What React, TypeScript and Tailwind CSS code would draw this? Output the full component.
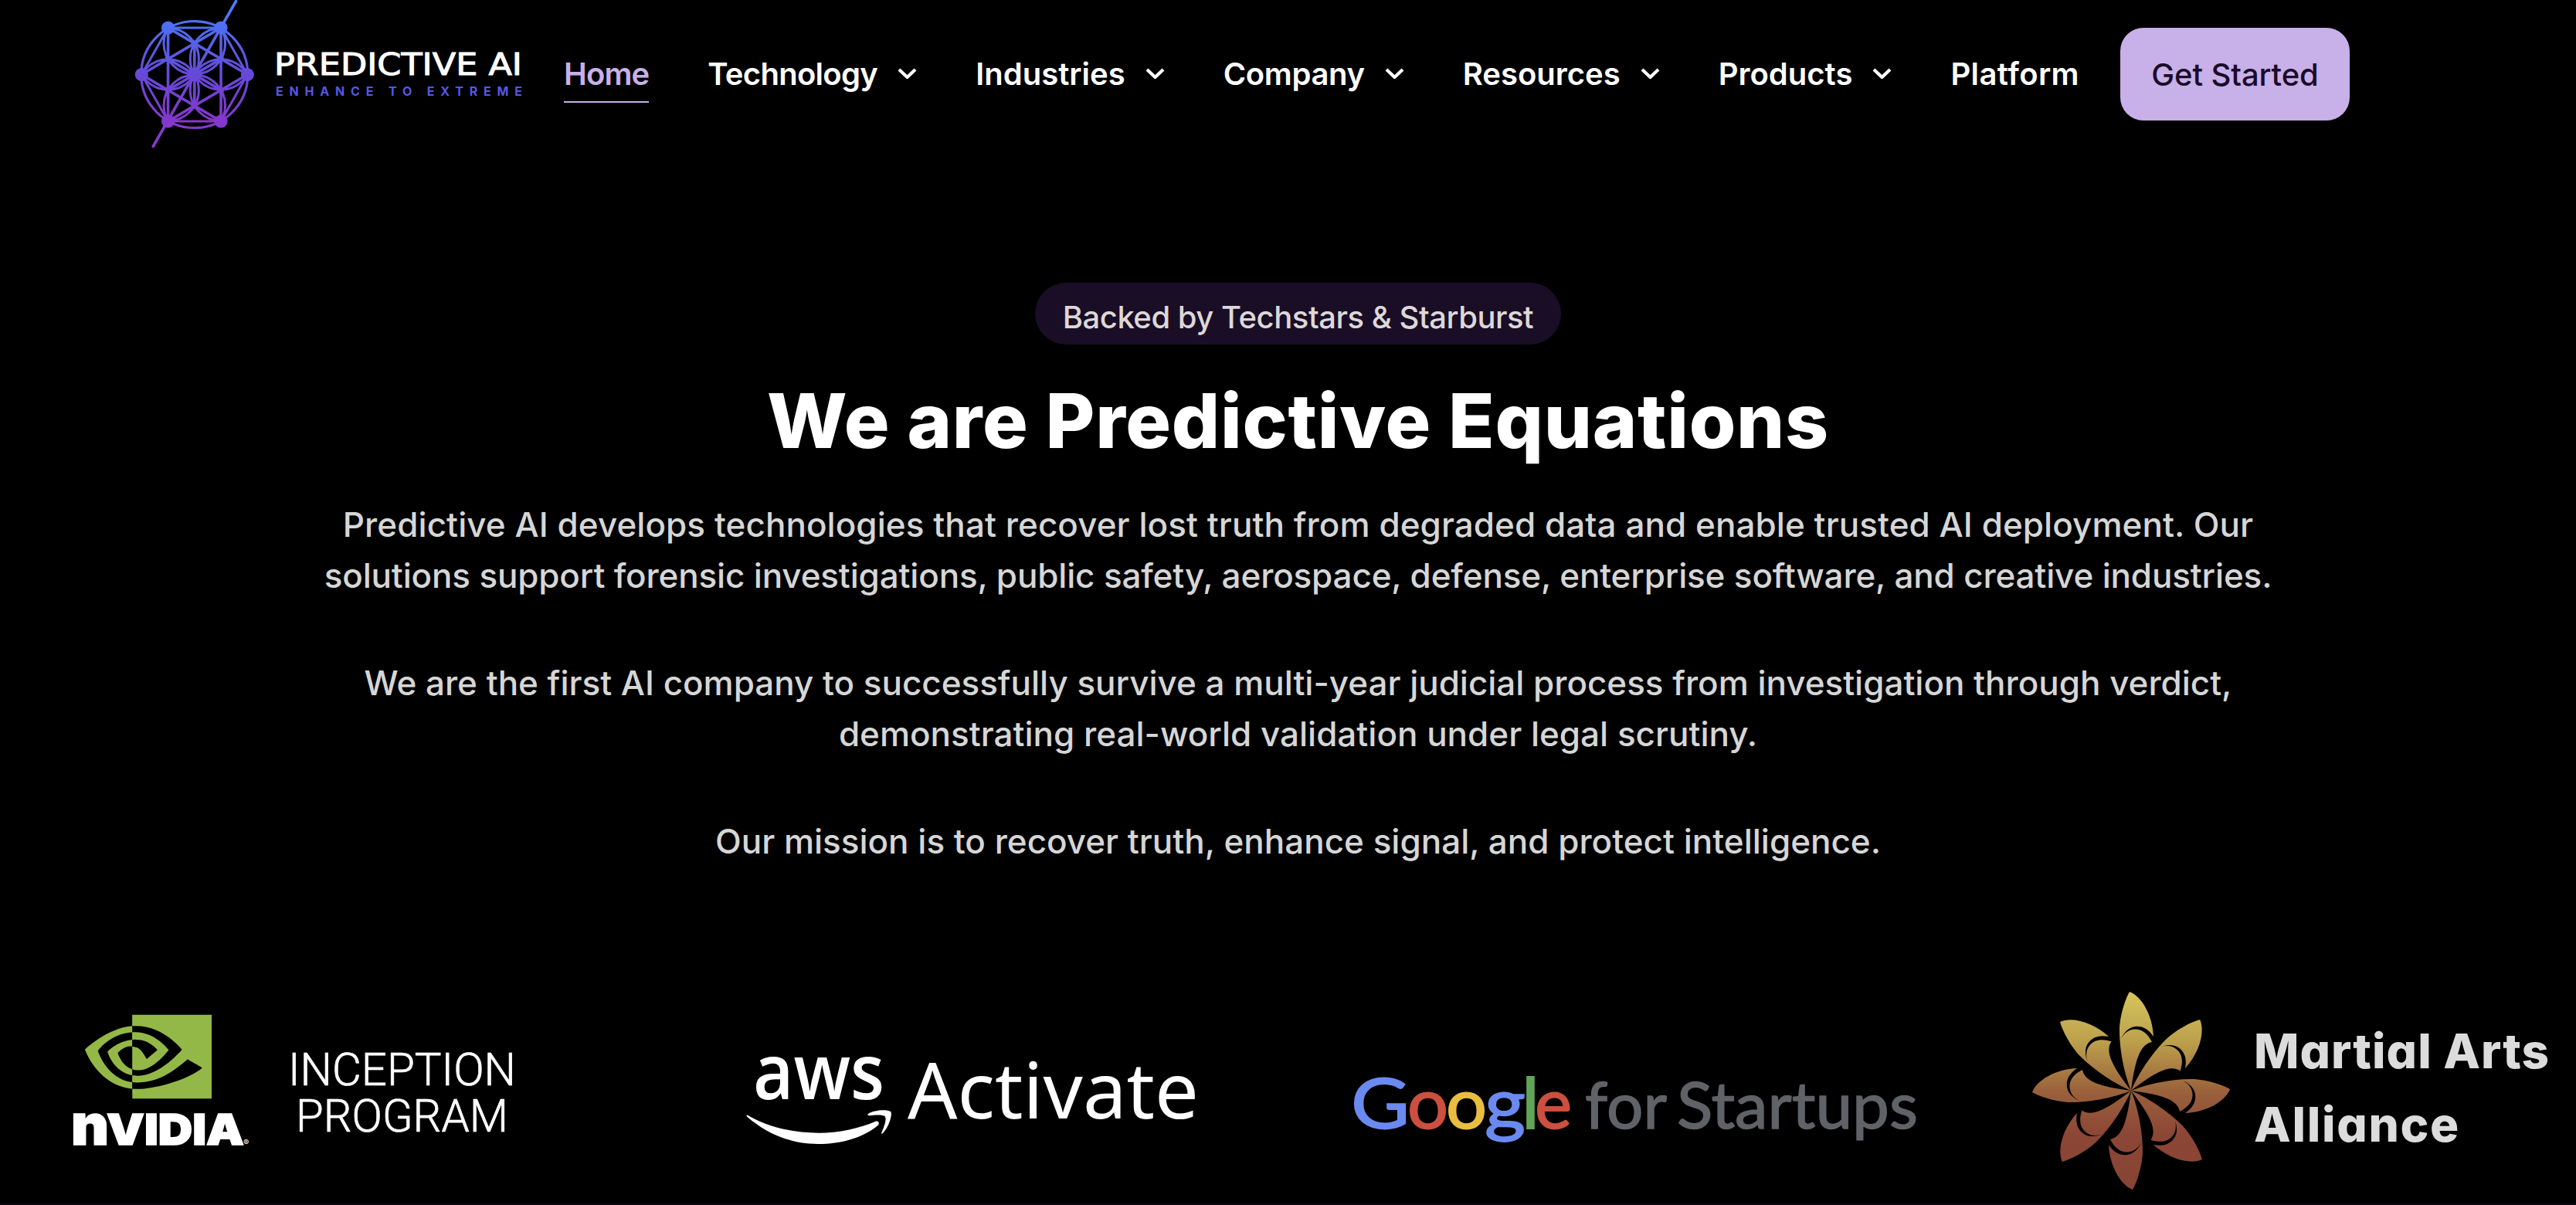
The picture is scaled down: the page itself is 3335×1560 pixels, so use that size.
import { SiNvidia } from "react-icons/si";

interface NavItemI {
    label: string;
    menu?: boolean;
    active?: boolean;
    tracking: string;
}

const navItems: NavItemI[] = [
    { label: "Home", active: true, tracking: "tracking-[-0.9px]" },
    { label: "Technology", menu: true, tracking: "tracking-[-0.7px]" },
    { label: "Industries", menu: true, tracking: "tracking-normal" },
    { label: "Company", menu: true, tracking: "tracking-[-0.35px]" },
    { label: "Resources", menu: true, tracking: "tracking-normal" },
    { label: "Products", menu: true, tracking: "tracking-normal" },
    { label: "Platform", tracking: "tracking-[0.4px]" },
];

// logo geometry: six outer nodes on a circle, six inner nodes where the petals meet
const CX = 251.8;
const CY = 96.5;

function ring(radius: number, offset: number) {
    return [0, 1, 2, 3, 4, 5].map((i) => {
        const a = ((i * 60 + offset) * Math.PI) / 180;
        return { x: CX + radius * Math.cos(a), y: CY + radius * Math.sin(a) * 1.02 };
    });
}

const outer = ring(68.5, 0);
const inner = ring(39.5, 30);

function BrandLogo() {
    return (
        <svg className="block shrink-0" width="535" height="192" viewBox="167 0 535 192">
            <defs>
                <linearGradient id="brand" gradientUnits="userSpaceOnUse" x1="0" y1="0" x2="0" y2="192">
                    <stop offset="0" stopColor="#4c80fa" />
                    <stop offset="0.2" stopColor="#506cee" />
                    <stop offset="0.5" stopColor="#6549d8" />
                    <stop offset="0.8" stopColor="#8338cc" />
                    <stop offset="1" stopColor="#8c36cc" />
                </linearGradient>
                <clipPath id="globe">
                    <circle cx={CX} cy={CY} r="70" />
                </clipPath>
            </defs>
            <g fill="none" stroke="url(#brand)" strokeWidth="3">
                <circle cx={CX} cy={CY} r="69" strokeWidth="3.2" />
                <g clipPath="url(#globe)">
                    {inner.map((p, i) => (
                        <circle key={i} cx={p.x} cy={p.y} r="39.8" />
                    ))}
                </g>
                {outer.map((p, i) => {
                    const next = outer[(i + 1) % 6];
                    const skip = outer[(i + 2) % 6];
                    return (
                        <g key={i}>
                            <path d={`M${p.x} ${p.y}L${next.x} ${next.y}`} />
                            <path d={`M${p.x} ${p.y}L${skip.x} ${skip.y}`} strokeWidth="3.6" />
                        </g>
                    );
                })}
                {inner.map((p, i) => (
                    <path key={i} d={`M${CX} ${CY}L${p.x} ${p.y}`} strokeWidth="3.6" />
                ))}
                <path d="M305.5 1.5L198.3 189.5" strokeWidth="3.6" strokeLinecap="round" />
            </g>
            <g fill="url(#brand)">
                {outer.map((p, i) => (
                    <circle key={i} cx={p.x} cy={p.y} r="8.6" />
                ))}
                {inner.map((p, i) => (
                    <circle key={i} cx={p.x} cy={p.y} r="4" />
                ))}
                <circle cx={CX} cy={CY} r="9" />
            </g>
            <text x="355" y="97" textLength="321" lengthAdjust="spacingAndGlyphs" fontFamily="DejaVu Sans" fontSize="38.5" fill="#fff" stroke="#fff" strokeWidth="1">
                PREDICTIVE AI
            </text>
            <text x="357" y="124" textLength="319" fontFamily="Inter" fontWeight="700" fontSize="16" fill="#5558e0">
                ENHANCE TO EXTREME
            </text>
        </svg>
    );
}

function Chevron() {
    return (
        <svg className="ml-[26px]" width="25" height="15" viewBox="0 0 25 15" fill="none" stroke="#fff" strokeWidth="4.2">
            <path d="M2 2L12.5 12L23 2" strokeLinejoin="round" />
        </svg>
    );
}

function Header() {
    return (
        <header className="flex h-[192px] items-start pl-[167px]">
            <BrandLogo />
            <nav className="ml-[28px] flex gap-[76px] pt-[60px]">
                {navItems.map(({ label, menu, active, tracking }) => (
                    <a key={label} className={`flex items-center border-b-2 text-[40px] leading-[71px] font-semibold ${tracking} ${active ? "border-[#c8b0e8] text-[#c8b0e8]" : "border-transparent"}`}>
                        {label}
                        {menu && <Chevron />}
                    </a>
                ))}
            </nav>
            <button className="mt-[36px] ml-[53px] h-[120px] w-[297px] rounded-[30px] bg-[#c8b0e8] text-[40px] leading-[119px] font-medium tracking-[-0.1px] text-[#1b0b2a]">
                Get Started
            </button>
        </header>
    );
}

function Hero() {
    return (
        <section className="flex flex-col items-center pt-[174px] pl-[26px] text-center">
            <div className="h-[80px] w-[681px] rounded-full bg-[#1a0d26] pt-[5px] text-[40px] leading-[80px] font-[450] tracking-[-0.47px] text-[#dcd8d8]">
                Backed by Techstars &amp; Starburst
            </div>
            <h1 className="mt-[39px] text-[98px] leading-[120px] font-extrabold tracking-[0.7px]">We are Predictive Equations</h1>
            <div className="mt-[41px] flex flex-col gap-[73px] text-[44px] leading-[66px] font-medium whitespace-nowrap text-[#d6d6d6]">
                <p>
                    <span className="tracking-[0.06px]">
                        Predictive AI develops technologies that recover lost truth from degraded data and enable trusted AI deployment. Our
                    </span>
                    <br />
                    <span className="tracking-[-0.16px]">
                        solutions support forensic investigations, public safety, aerospace, defense, enterprise software, and creative industries.
                    </span>
                </p>
                <p>
                    <span className="tracking-[-0.02px]">
                        We are the first AI company to successfully survive a multi-year judicial process from investigation through verdict,
                    </span>
                    <br />
                    demonstrating real-world validation under legal scrutiny.
                </p>
                <p>Our mission is to recover truth, enhance signal, and protect intelligence.</p>
            </div>
        </section>
    );
}

function NvidiaLogo() {
    return (
        <div className="flex pl-[90px]">
            <div className="flex w-[240px] shrink-0 flex-col">
                <SiNvidia className="mt-[16px] ml-[20px] text-[#93b848]" size={164} />
                <svg className="-mt-[25px] overflow-visible" width="240" height="70" viewBox="90 1425 240 70" fill="#fff" fontFamily="Inter" fontWeight="900">
                    <g stroke="#fff" strokeWidth="1.6">
                        <text x="92" y="1482" fontSize="73" textLength="49" lengthAdjust="spacingAndGlyphs">n</text>
                        <text x="138" y="1482" fontSize="55.5" textLength="178" lengthAdjust="spacingAndGlyphs">VIDIA</text>
                    </g>
                    <text x="315" y="1483" fontSize="11" fontWeight="500">®</text>
                </svg>
            </div>
            <svg className="mt-[80px] ml-[40px] shrink-0 overflow-visible" width="310" height="130" viewBox="370 1350 310 130" fill="#fff" stroke="#fff" strokeWidth="0.7" fontFamily="Roboto" fontWeight="300" fontSize="59.5">
                <text x="373" y="1405" textLength="295" lengthAdjust="spacingAndGlyphs">INCEPTION</text>
                <text x="383" y="1465" textLength="275" lengthAdjust="spacingAndGlyphs">PROGRAM</text>
            </svg>
        </div>
    );
}

function AwsLogo() {
    return (
        <svg className="mt-[50px] overflow-visible" width="620" height="180" viewBox="950 1320 620 180" fill="#fff">
            <text x="975" y="1422.7" fontFamily="Open Sans" fontWeight="600" fontSize="99" textLength="170" lengthAdjust="spacingAndGlyphs">aws</text>
            <path d="M967.5 1443.5C994 1459 1026 1466.7 1060 1466.7C1086 1466.7 1112 1461 1133 1452C1137 1450.5 1139.5 1453.5 1136.5 1457C1117 1473 1089 1481 1059 1481C1024 1481 993 1468 967.5 1446C966 1444.5 966.5 1443 967.5 1443.5Z" />
            <path d="M1124 1442C1131 1437 1148 1436 1153 1439C1156 1442 1151 1459 1143 1467C1141.5 1468.5 1140.5 1467.5 1141.5 1466C1144.5 1459 1148 1450 1146 1445.5C1143 1442.5 1132 1443.5 1126 1444.3C1123.5 1444.5 1122.5 1443.2 1124 1442Z" />
            <text x="1175" y="1448" fontFamily="Noto Sans" fontSize="100" textLength="377" lengthAdjust="spacingAndGlyphs">Activate</text>
        </svg>
    );
}

const googleLetters = [
    { char: "G", x: 1749, width: 76, color: "#6b8af0" },
    { char: "o", x: 1822, width: 53, color: "#cb5040" },
    { char: "o", x: 1872, width: 53, color: "#e9be40" },
    { char: "g", x: 1922, width: 53, color: "#6b8af0" },
    { char: "l", x: 1970, width: 23, color: "#62a558" },
    { char: "e", x: 1987, width: 48, color: "#cb5040" },
];

function GoogleLogo() {
    return (
        <svg className="mt-[90px]" width="760" height="150" viewBox="1740 1360 760 150" fontFamily="Lato">
            {googleLetters.map(({ char, x, width, color }, i) => (
                <text key={i} x={x} y="1460.5" fontSize="91" fill={color} stroke={color} strokeWidth="1.8" textLength={width} lengthAdjust="spacingAndGlyphs">
                    {char}
                </text>
            ))}
            <g fontSize="84" fill="#5f6368" stroke="#5f6368" strokeWidth="1.5">
                <text x="2052" y="1460.5" textLength="106" lengthAdjust="spacingAndGlyphs">for</text>
                <text x="2171" y="1460.5" textLength="312" lengthAdjust="spacingAndGlyphs">Startups</text>
            </g>
        </svg>
    );
}

const petals = [0, 45, 90, 135, 180, 225, 270, 315];

function MartialArtsLogo() {
    return (
        <div className="flex">
            <svg className="mt-[4px]" width="270" height="276" viewBox="-135 -138 270 276">
                <defs>
                    <linearGradient id="flower" gradientUnits="userSpaceOnUse" x1="0" y1="-128" x2="0" y2="128">
                        <stop offset="0" stopColor="#d6c65c" />
                        <stop offset="0.25" stopColor="#bca04c" />
                        <stop offset="0.5" stopColor="#9a623c" />
                        <stop offset="0.72" stopColor="#8c4636" />
                        <stop offset="1" stopColor="#864434" />
                    </linearGradient>
                    <clipPath id="petals">
                        {petals.map((angle) => (
                            <path
                                key={angle}
                                transform={`rotate(${angle})`}
                                d="M-2 -128C14 -122 28 -97 29 -70C21 -82 12 -84 5 -83C-4 -82 -10 -74 -13 -67C-9 -75 -2 -79.5 5 -79.5C13 -80 21 -75 27 -63C11 -60 5 -38 0 0C-8 -20 -15 -50 -15 -78C-15 -95 -8 -118 -2 -128Z"
                            />
                        ))}
                    </clipPath>
                </defs>
                <rect x="-135" y="-138" width="270" height="276" fill="url(#flower)" clipPath="url(#petals)" />
            </svg>
            <div className="mt-[43px] ml-[24px] text-[62px] leading-[95px] font-extrabold text-[#dcdcdc] [font-feature-settings:'cv11']">
                <p className="tracking-[1px]">Martial Arts</p>
                <p className="tracking-[1.7px]">Alliance</p>
            </div>
        </div>
    );
}

function App() {
    return (
        <main className="flex h-[1560px] w-[3335px] flex-col overflow-hidden bg-black font-['Inter',sans-serif] text-white">
            <Header />
            <Hero />
            <section className="mt-[148px] flex h-[288px] items-start whitespace-nowrap">
                <div className="w-[950px]">
                    <NvidiaLogo />
                </div>
                <div className="w-[790px]">
                    <AwsLogo />
                </div>
                <div className="w-[884px]">
                    <GoogleLogo />
                </div>
                <MartialArtsLogo />
            </section>
            <div className="h-[2px] bg-[#0b0710]" />
        </main>
    );
}

export default App;
